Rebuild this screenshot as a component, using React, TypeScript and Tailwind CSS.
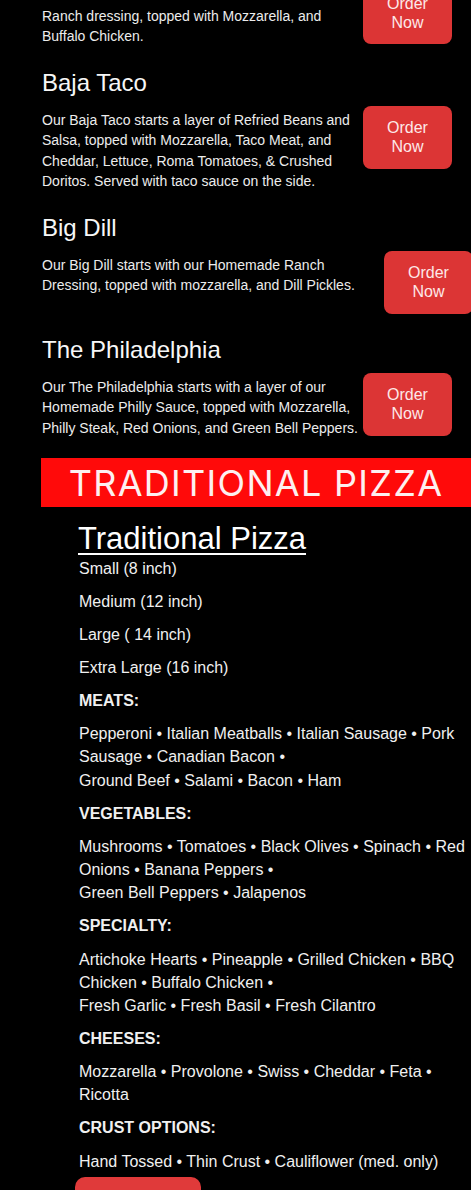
import React from "react";

type Item = { title?: string; desc: string; btnMl?: string; top?: boolean };

function OrderButton({ ml }: { ml?: string }) {
  return (
    <button
      className={`shrink-0 w-[89px] h-[63px] rounded-[8px] bg-[#dc3535] text-[#fde8e8] text-[16px] leading-[19px] flex flex-col items-center justify-center ${ml ?? ""}`}
    >
      <span>Order</span>
      <span>Now</span>
    </button>
  );
}

function MenuItem({ title, desc, btnMl, top }: Item) {
  return (
    <div className={top ? "mt-[-19px] mb-[21px]" : "mb-[21px]"}>
      {title && (
        <h3 className="text-[24px] leading-[29px] text-[#f7f7f7] mb-[9px] font-normal">{title}</h3>
      )}
      <div className="flex items-start">
        <p className="shrink-0 w-[321px] pt-[4px] text-[14px] leading-[20.5px] text-[#ececec]">{desc}</p>
        <OrderButton ml={btnMl} />
      </div>
    </div>
  );
}

function P({ children, bold }: { children: React.ReactNode; bold?: boolean }) {
  return (
    <p className={`ml-px text-[16px] leading-[23.15px] mb-[10px] text-[#f0f0f0] ${bold ? "font-bold" : ""}`}>
      {children}
    </p>
  );
}

export default function App() {
  return (
    <div
      className="w-[471px] h-[1190px] overflow-hidden bg-black"
      style={{ fontFamily: '"Liberation Sans", Arial, sans-serif' }}
    >
      <div className="pl-[42px]">
        <MenuItem
          top
          desc="Our Buffalo Ranch starts with our Homemade Ranch dressing, topped with Mozzarella, and Buffalo Chicken."
        />
        <MenuItem
          title="Baja Taco"
          desc="Our Baja Taco starts a layer of Refried Beans and Salsa, topped with Mozzarella, Taco Meat, and Cheddar, Lettuce, Roma Tomatoes, & Crushed Doritos. Served with taco sauce on the side."
        />
        <MenuItem
          title="Big Dill"
          btnMl="ml-[21px]"
          desc="Our Big Dill starts with our Homemade Ranch Dressing, topped with mozzarella, and Dill Pickles."
        />
        <div>
          <h3 className="text-[24px] leading-[29px] text-[#f7f7f7] mb-[9px] font-normal">The Philadelphia</h3>
          <div className="flex items-start">
            <p className="shrink-0 w-[321px] pt-[4px] text-[14px] leading-[20.5px] text-[#ececec]">
              Our The Philadelphia starts with a layer of our Homemade Philly Sauce, topped with Mozzarella, Philly Steak, Red Onions, and Green Bell Peppers.
            </p>
            <OrderButton />
          </div>
        </div>
      </div>

      <div className="ml-[41px] mt-[20px] h-[49px] bg-[#ff0a0a] flex items-center justify-center">
        <span
          className="text-[36px] leading-none text-[#fdf0f0] tracking-[1.3px]"
          style={{ fontFamily: 'Inter, "Noto Sans", sans-serif' }}
        >
          TRADITIONAL PIZZA
        </span>
      </div>

      <div className="pl-[78px] pr-[4px] mt-[15px]">
        <h2 className="text-[31px] leading-[34.5px] text-white underline underline-offset-[4px] decoration-[2px]">
          Traditional Pizza
        </h2>
        <P>Small (8 inch)</P>
        <P>Medium (12 inch)</P>
        <P>Large ( 14 inch)</P>
        <P>Extra Large (16 inch)</P>
        <P bold>MEATS:</P>
        <P>
          Pepperoni • Italian Meatballs • Italian Sausage • Pork Sausage • Canadian Bacon •
          <br />
          Ground Beef • Salami • Bacon • Ham
        </P>
        <P bold>VEGETABLES:</P>
        <P>
          Mushrooms • Tomatoes • Black Olives • Spinach • Red Onions • Banana Peppers •
          <br />
          Green Bell Peppers • Jalapenos
        </P>
        <P bold>SPECIALTY:</P>
        <P>
          Artichoke Hearts • Pineapple • Grilled Chicken • BBQ Chicken • Buffalo Chicken •
          <br />
          Fresh Garlic • Fresh Basil • Fresh Cilantro
        </P>
        <P bold>CHEESES:</P>
        <P>Mozzarella • Provolone • Swiss • Cheddar • Feta • Ricotta</P>
        <P bold>CRUST OPTIONS:</P>
        <P>Hand Tossed • Thin Crust • Cauliflower (med. only)</P>
        <button className="-ml-[3px] -mt-[6px] w-[126px] h-[46px] rounded-[10px] bg-[#e03a3a] text-white text-[16px] pt-[20px]">
          Order Now
        </button>
      </div>
    </div>
  );
}
